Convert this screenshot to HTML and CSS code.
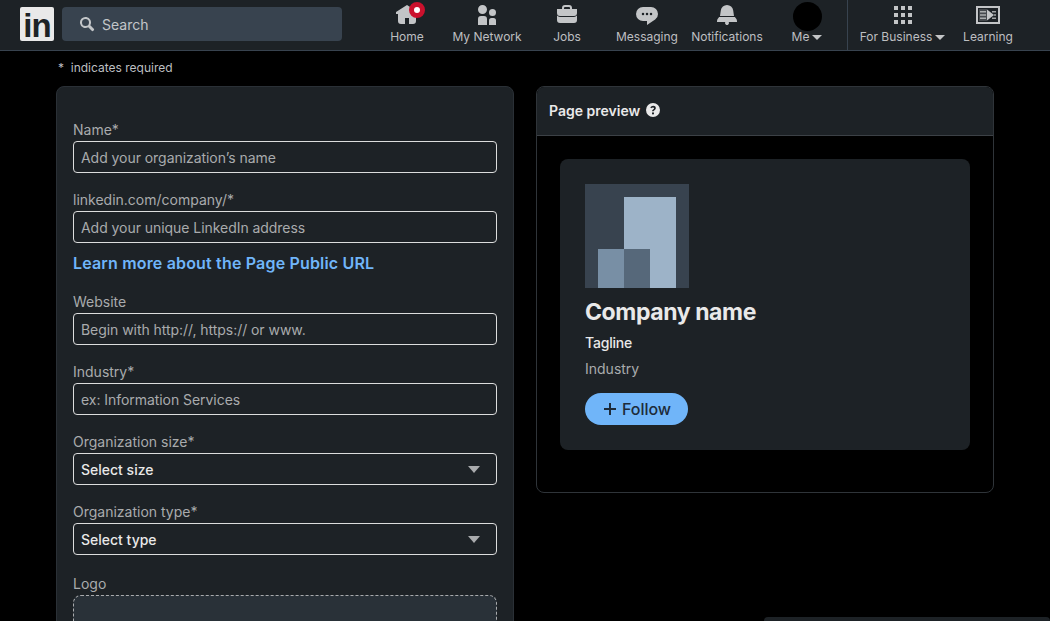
FILE: index.html
```html
<!DOCTYPE html>
<html lang="en">
<head>
  <meta charset="UTF-8" />
  <title>Create a LinkedIn Page</title>
  <link rel="stylesheet" href="styles.css">
</head>
<body>
  <header class="topbar">
    <div class="logo"><span class="logo-text">in</span></div>
    <div class="search">
      <svg class="search-icon" viewBox="0 0 16 16"><path d="M14.56 12.44L11.3 9.18a5.51 5.51 0 10-2.12 2.12l3.26 3.26a1.5 1.5 0 102.12-2.12zM3 6.5A3.5 3.5 0 116.5 10 3.5 3.5 0 013 6.5z"/></svg>
      <span>Search</span>
    </div>
    <nav class="nav">
      <a class="nav-item">
        <svg class="nav-icon" viewBox="0 0 24 24"><path d="M23 9v2h-2v7a3 3 0 01-3 3h-4v-6h-4v6H6a3 3 0 01-3-3v-7H1V9l11-7 5 3.18V2h3v5.09z"/></svg>
        <span class="badge"></span>
        Home
      </a>
      <a class="nav-item">
        <svg class="nav-icon" viewBox="0 0 24 24"><path d="M12 16v6H3v-6a3 3 0 013-3h3a3 3 0 013 3zm5.5-3A3.5 3.5 0 1014 9.5a3.5 3.5 0 003.5 3.5zm1 2h-2a2.5 2.5 0 00-2.5 2.5V22h7v-4.5a2.5 2.5 0 00-2.5-2.5zM7.5 2A4.5 4.5 0 1012 6.5 4.49 4.49 0 007.5 2z"/></svg>
        My Network
      </a>
      <a class="nav-item">
        <svg class="nav-icon" viewBox="0 0 24 24"><path d="M17 6V5a3 3 0 00-3-3h-4a3 3 0 00-3 3v1H2v4a3 3 0 003 3h14a3 3 0 003-3V6zM9 5a1 1 0 011-1h4a1 1 0 011 1v1H9zm10 9a4 4 0 003-1.38V17a3 3 0 01-3 3H5a3 3 0 01-3-3v-4.38A4 4 0 005 14z"/></svg>
        Jobs
      </a>
      <a class="nav-item">
        <svg class="nav-icon" viewBox="0 0 24 24"><path d="M16 4H8a7 7 0 000 14h4v4l8.16-5.39A6.78 6.78 0 0023 11a7 7 0 00-7-7zm-8 8.25A1.25 1.25 0 119.25 11 1.25 1.25 0 018 12.25zm4 0A1.25 1.25 0 1113.25 11 1.25 1.25 0 0112 12.25zm4 0A1.25 1.25 0 1117.25 11 1.25 1.25 0 0116 12.25z"/></svg>
        Messaging
      </a>
      <a class="nav-item">
        <svg class="nav-icon" viewBox="0 0 24 24"><path d="M22 19h-8.28a2 2 0 11-3.44 0H2v-1a4.52 4.52 0 011.17-2.83l1-1.17h15.7l1 1.17A4.42 4.42 0 0122 18zM18.21 7.44A6.27 6.27 0 0012 2a6.27 6.27 0 00-6.21 5.44L5 13h14z"/></svg>
        Notifications
      </a>
      <a class="nav-item">
        <span class="avatar"></span>
        <span class="with-caret">Me <i class="caret"></i></span>
      </a>
      <a class="nav-item nav-business">
        <svg class="nav-icon" viewBox="0 0 24 24"><path d="M3 3h4v4H3zm7 4h4V3h-4zm7-4v4h4V3zM3 14h4v-4H3zm7 0h4v-4h-4zm7 0h4v-4h-4zM3 21h4v-4H3zm7 0h4v-4h-4zm7 0h4v-4h-4z"/></svg>
        <span class="with-caret">For Business <i class="caret"></i></span>
      </a>
      <a class="nav-item nav-learning">
        <svg class="nav-icon" viewBox="0 0 24 24"><path fill-rule="evenodd" d="M0 3h24v18H0zm2 2v14h20V5z"/><path d="M3 6h8v12H3z" opacity=".25"/><path d="M4 8h6v1.500H4zm0 3.250h6v1.500H4zm0 3.250h6V16H4z" opacity=".8"/><path d="M11 6.500l7 5.500-7 5.500z"/><path d="M16 8h4v1.500h-4zm2 3.250h2v1.500h-2zm-2 3.250h4V16h-4z" opacity=".8"/></svg>
        Learning
      </a>
    </nav>
  </header>

  <p class="required-note">*&nbsp; indicates required</p>

  <main class="layout">
    <form class="form-card">
      <label class="field-label" for="orgName">Name*</label>
      <input class="field" id="orgName" type="text" placeholder="Add your organization’s name">

      <label class="field-label" for="orgUrl">linkedin.com/company/*</label>
      <input class="field" id="orgUrl" type="text" placeholder="Add your unique LinkedIn address">
      <a class="learn-link">Learn more about the Page Public URL</a>

      <label class="field-label" for="orgSite">Website</label>
      <input class="field" id="orgSite" type="text" placeholder="Begin with http://, https:// or www.">

      <label class="field-label" for="orgIndustry">Industry*</label>
      <input class="field" id="orgIndustry" type="text" placeholder="ex: Information Services">

      <label class="field-label" for="orgSize">Organization size*</label>
      <div class="select-wrap">
        <select class="field field-select" id="orgSize">
          <option>Select size</option>
        </select>
        <i class="select-caret"></i>
      </div>

      <label class="field-label" for="orgType">Organization type*</label>
      <div class="select-wrap">
        <select class="field field-select" id="orgType">
          <option>Select type</option>
        </select>
        <i class="select-caret"></i>
      </div>

      <label class="field-label logo-label">Logo</label>
      <div class="logo-drop"></div>
    </form>

    <section class="preview">
      <div class="preview-head">
        <h2>Page preview</h2>
        <svg class="help-icon" viewBox="0 0 16 16"><path d="M8 1a7 7 0 107 7 7 7 0 00-7-7zm0 11.500a1.100 1.100 0 111.100-1.100A1.100 1.100 0 018 12.500zm1.500-4.300c-.6.400-.8.600-.8 1.100H7.100c0-1.100.5-1.600 1.300-2.100.5-.3.700-.5.700-.9 0-.5-.4-.8-1.100-.8s-1.300.3-1.800.8l-.9-1.100A3.900 3.900 0 018.100 3.800c1.700 0 2.700.9 2.700 2.200 0 1-.5 1.600-1.300 2.200z"/></svg>
      </div>
      <div class="preview-body">
        <div class="company-card">
          <svg class="company-logo" viewBox="0 0 104 104">
            <rect width="104" height="104" fill="#38434f"/>
            <rect x="39" y="13" width="52" height="91" fill="#9db3c8"/>
            <rect x="13" y="65" width="26" height="39" fill="#788fa5"/>
            <rect x="39" y="65" width="26" height="39" fill="#56687a"/>
          </svg>
          <h3 class="company-name">Company name</h3>
          <div class="company-tagline">Tagline</div>
          <div class="company-industry">Industry</div>
          <button class="follow-btn" type="button">
            <svg class="plus" viewBox="0 0 16 16"><path d="M14 9H9v5H7V9H2V7h5V2h2v5h5z"/></svg>
            Follow
          </button>
        </div>
      </div>
    </section>
  </main>

  <div class="msg-overlay"></div>
</body>
</html>
```

FILE: styles.css
```css
* {
  box-sizing: border-box;
  margin: 0;
  padding: 0;
}

html, body {
  height: 621px;
  overflow: hidden;
}

body {
  font-family: Inter, 'Noto Sans', sans-serif;
  background: #000;
  color: #fff;
  position: relative;
}

.topbar {
  height: 51px;
  background: #1d2226;
  border-bottom: 1px solid #38434f;
  display: flex;
  align-items: flex-start;
  padding-left: 20px;
}

.logo {
  width: 34px;
  height: 34px;
  margin-top: 7px;
  padding-top: 4px;
  background: #e9e9e9;
  border-radius: 2px;
  color: #1d2226;
  display: flex;
  align-items: flex-start;
  justify-content: center;
}

.logo-text {
  font-family: 'Liberation Sans', sans-serif;
  font-weight: 700;
  font-size: 33px;
  line-height: 30px;
  letter-spacing: -1px;
}

.search {
  width: 280px;
  height: 34px;
  margin: 7px 0 0 8px;
  background: #38434f;
  border-radius: 4px;
  display: flex;
  align-items: center;
  padding-left: 17px;
  gap: 7px;
  font-size: 14px;
  color: #c3c6c9;
}

.search-icon {
  width: 16px;
  height: 16px;
  fill: #c3c6c9;
}

.nav {
  display: flex;
  margin-left: 25px;
}

.nav-item {
  width: 80px;
  height: 50px;
  display: flex;
  flex-direction: column;
  align-items: center;
  font-size: 12px;
  line-height: 16px;
  padding-top: 3px;
  color: #bdbfc1;
  position: relative;
  white-space: nowrap;
}

.nav-icon {
  width: 24px;
  height: 24px;
  fill: #c3c5c7;
  margin-bottom: 2px;
  flex: none;
}

.badge {
  position: absolute;
  left: 42px;
  top: 2px;
  width: 16px;
  height: 16px;
  border-radius: 50%;
  background: #cb112d;
  border: 5px solid #cb112d;
}

.badge::after {
  content: "";
  display: block;
  width: 6px;
  height: 6px;
  border-radius: 50%;
  background: #fff;
}

.avatar {
  width: 29px;
  height: 29px;
  margin: -1px 0 -2px;
  flex: none;
  border-radius: 50%;
  background: #000;
}

.with-caret {
  display: inline-flex;
  align-items: center;
  gap: 3px;
}

.caret {
  width: 0;
  height: 0;
  border-left: 5px solid transparent;
  border-right: 5px solid transparent;
  border-top: 5px solid #c3c5c7;
}

.nav-business {
  width: 110px;
  border-left: 1px solid #38434f;
}

.nav-learning {
  width: 62px;
}

.required-note {
  font-size: 12px;
  line-height: 16px;
  color: #bdbfc1;
  margin: 9px 0 0 58px;
}

.layout {
  display: grid;
  grid-template-columns: 458px 458px;
  gap: 22px;
  margin: 10px 0 0 56px;
  align-items: start;
}

.form-card {
  background: #1d2226;
  border-radius: 8px;
  padding: 33px 16px 60px;
  border: 1px solid #2a3036;
}

.field-label {
  display: block;
  font-size: 14px;
  line-height: 20px;
  color: #a9abad;
  margin-bottom: 1px;
}

.logo-label {
  padding-top: 2px;
}

.field {
  display: block;
  width: 100%;
  height: 32px;
  margin-bottom: 17px;
  padding: 0 7px;
  font-family: inherit;
  font-size: 14px;
  letter-spacing: -0.05px;
  color: #fff;
  background: #1d2226;
  border: 1px solid #dcdddd;
  border-radius: 4px;
}

.field::placeholder {
  color: #a9abad;
  opacity: 1;
}

.learn-link {
  display: block;
  margin: -7px 0 19px;
  font-size: 16px;
  line-height: 20px;
  font-weight: 600;
  letter-spacing: 0.17px;
  color: #70b5f9;
}

.select-wrap {
  position: relative;
}

.field-select {
  appearance: none;
  font-weight: 500;
  letter-spacing: 0;
  color: #e9e9e9;
}

.select-caret {
  position: absolute;
  right: 17px;
  top: 13px;
  width: 0;
  height: 0;
  border-left: 6px solid transparent;
  border-right: 6px solid transparent;
  border-top: 7px solid #a9abad;
}

.logo-drop {
  height: 120px;
  background: #293138;
  border: 1px dashed #a9abad;
  border-radius: 8px;
}

.preview {
  background: #000;
  border: 1px solid #2f3439;
  border-radius: 8px;
  overflow: hidden;
  height: 407px;
}

.preview-head {
  height: 49px;
  padding: 0 0 2px 12px;
  background: #1d2226;
  border-bottom: 1px solid #3c4146;
  display: flex;
  align-items: center;
  gap: 5px;
}

.preview-head h2 {
  font-size: 14px;
  font-weight: 600;
  color: #e9e9e9;
}

.help-icon {
  width: 16px;
  height: 16px;
  fill: #e9e9e9;
}

.preview-body {
  padding: 23px 23px 0;
}

.company-card {
  height: 291px;
  background: #1d2226;
  border-radius: 8px;
  padding: 25px;
}

.company-logo {
  display: block;
  width: 104px;
  height: 104px;
}

.company-name {
  margin-top: 9px;
  font-size: 23px;
  line-height: 30px;
  font-weight: 700;
  letter-spacing: -0.4px;
  color: #e9e9e9;
}

.company-tagline {
  margin-top: 6px;
  font-size: 14px;
  line-height: 20px;
  font-weight: 500;
  letter-spacing: -0.2px;
  color: #e9e9e9;
}

.company-industry {
  margin-top: 6px;
  font-size: 14px;
  line-height: 20px;
  color: #a9abad;
}

.follow-btn {
  margin-top: 14px;
  width: 103px;
  height: 32px;
  border: 0;
  border-radius: 16px;
  background: #70b5f9;
  color: #1d2b3a;
  font-family: inherit;
  font-size: 16px;
  font-weight: 500;
  display: flex;
  align-items: center;
  justify-content: center;
  gap: 4px;
}

.plus {
  width: 16px;
  height: 16px;
  fill: #1d2b3a;
}

.msg-overlay {
  position: absolute;
  right: 0;
  bottom: 0;
  width: 286px;
  height: 4px;
  background: #1d2226;
  border-radius: 8px 8px 0 0;
}
```
